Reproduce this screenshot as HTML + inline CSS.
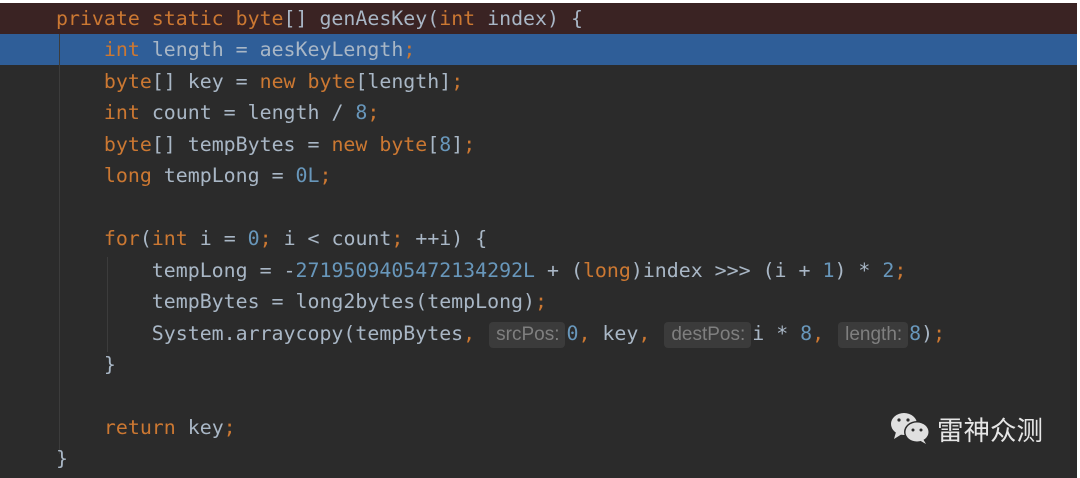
<!DOCTYPE html>
<html><head><meta charset="utf-8"><style>
*{margin:0;padding:0}
body{width:1080px;height:478px;background:#fff;overflow:hidden;position:relative}
#ed{position:absolute;left:0;top:3px;width:1077px;height:475px;background:#2b2b2b}
.bg1{position:absolute;left:0;top:0;width:1077px;height:31px;background:#3a2323}
.bg2{position:absolute;left:0;top:31px;width:1077px;height:31px;background:#2f5e98}
.l{position:absolute;left:56px;font-family:"DejaVu Sans Mono","Liberation Mono",monospace;font-size:19.9px;color:#a9b7c6;white-space:pre;line-height:31px;height:31px}
.k{color:#cc7832}.n{color:#6897bb}
.h{display:inline-block;background:#3b3b3b;color:#7f7f7f;font-family:"Liberation Sans",sans-serif;font-size:19px;line-height:26px;padding:0 6px 0 7px;border-radius:4px;margin:0 1px 0 2px;vertical-align:0px}
.g{position:absolute;width:1px;background:#3c3c3c}
.t{position:absolute;left:937px;top:410px;color:#e6e6e6;font-family:"Noto Sans CJK SC",sans-serif;font-size:26.5px;line-height:32px}
</style></head><body><div id="ed">
<div class="bg1"></div><div class="bg2"></div>
<div class="g" style="left:59px;top:31px;height:420px"></div>
<div class="g" style="left:107px;top:254px;height:95px"></div>
<div class="l" style="top:0"><span class="k">private static byte</span>[] genAesKey(<span class="k">int</span> index) {</div>
<div class="l" style="top:31px">    <span class="k">int</span> length = aesKeyLength<span class="k">;</span></div>
<div class="l" style="top:62.5px">    <span class="k">byte</span>[] key = <span class="k">new byte</span>[length]<span class="k">;</span></div>
<div class="l" style="top:94px">    <span class="k">int</span> count = length / <span class="n">8</span><span class="k">;</span></div>
<div class="l" style="top:125.5px">    <span class="k">byte</span>[] tempBytes = <span class="k">new byte</span>[<span class="n">8</span>]<span class="k">;</span></div>
<div class="l" style="top:157px">    <span class="k">long</span> tempLong = <span class="n">0L</span><span class="k">;</span></div>
<div class="l" style="top:220px">    <span class="k">for</span>(<span class="k">int</span> i = <span class="n">0</span><span class="k">;</span> i &lt; count<span class="k">;</span> ++i) {</div>
<div class="l" style="top:251.5px">        tempLong = -<span class="n">2719509405472134292L</span> + (<span class="k">long</span>)index &gt;&gt;&gt; (i + <span class="n">1</span>) * <span class="n">2</span><span class="k">;</span></div>
<div class="l" style="top:283px">        tempBytes = long2bytes(tempLong)<span class="k">;</span></div>
<div class="l" style="top:314.5px">        System.arraycopy(tempBytes<span class="k">,</span> <span class="h">srcPos:</span><span class="n">0</span><span class="k">,</span> key<span class="k">,</span> <span class="h">destPos:</span>i * <span class="n">8</span><span class="k">,</span> <span class="h">length:</span><span class="n">8</span>)<span class="k">;</span></div>
<div class="l" style="top:346px">    }</div>
<div class="l" style="top:409px">    <span class="k">return</span> key<span class="k">;</span></div>
<div class="l" style="top:440px">}</div>
<svg style="position:absolute;left:889px;top:408px" width="44" height="36" viewBox="0 0 44 36">
<ellipse cx="15" cy="13" rx="13" ry="11" fill="#e0e0e0"/><path d="M7 21 L5 28 L13 23Z" fill="#e0e0e0"/>
<ellipse cx="28" cy="21" rx="13" ry="11" fill="#2b2b2b"/>
<ellipse cx="28" cy="21" rx="11.5" ry="9.5" fill="#e0e0e0"/><path d="M34 28 L37 33 L30 29Z" fill="#e0e0e0"/>
<circle cx="10" cy="9" r="1.6" fill="#2b2b2b"/><circle cx="19" cy="9" r="1.6" fill="#2b2b2b"/>
<circle cx="24" cy="19" r="1.5" fill="#2b2b2b"/><circle cx="32" cy="19" r="1.5" fill="#2b2b2b"/>
</svg>
<div class="t">雷神众测</div>
</div></body></html>
